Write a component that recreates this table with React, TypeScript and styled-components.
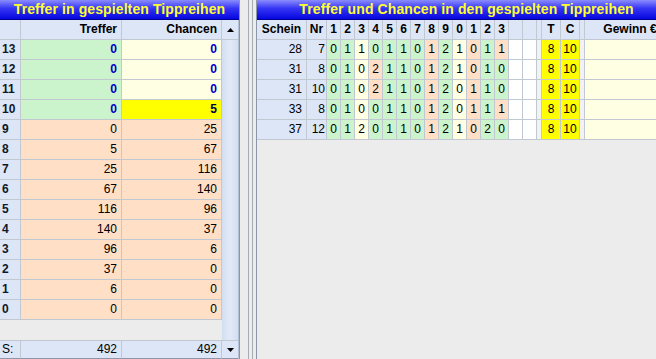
import React from 'react';
import styled, { createGlobalStyle } from 'styled-components';

const GlobalStyle = createGlobalStyle`
	html, body {
		margin: 0;
		padding: 0;
		overflow: hidden;
		background: #ececec;
		font-family: "Liberation Sans", Arial, sans-serif;
		font-size: 12px;
	}
`;

type Tone = 'head' | 'green' | 'cream' | 'salmon' | 'yellow' | 'white' | 'gray' | 'fill';

const tones: Record<Tone, string> = {
	head: '#dce6f6',
	green: '#ccf4cc',
	cream: '#ffffe4',
	salmon: '#ffdfc6',
	yellow: '#ffff00',
	white: '#ffffff',
	gray: '#f2f2f2',
	fill: '#ececec',
};

const leftRows = [
	{ n: 13, t: 0, c: 0, top: true },
	{ n: 12, t: 0, c: 0, top: true },
	{ n: 11, t: 0, c: 0, top: true },
	{ n: 10, t: 0, c: 5, top: true, hit: true },
	{ n: 9, t: 0, c: 25 },
	{ n: 8, t: 5, c: 67 },
	{ n: 7, t: 25, c: 116 },
	{ n: 6, t: 67, c: 140 },
	{ n: 5, t: 116, c: 96 },
	{ n: 4, t: 140, c: 37 },
	{ n: 3, t: 96, c: 6 },
	{ n: 2, t: 37, c: 0 },
	{ n: 1, t: 6, c: 0 },
	{ n: 0, t: 0, c: 0 },
];

const tips = [
	{ schein: 28, nr: 7, d: '0110110121011', c: 'GGCGGGGSGCSGS' },
	{ schein: 31, nr: 8, d: '0102110121010', c: 'GGCSGGGSGCSGG' },
	{ schein: 31, nr: 10, d: '0102110120110', c: 'GGCSGGGSGCSGG' },
	{ schein: 33, nr: 8, d: '0100110120111', c: 'GGCGGGGSGCSGS' },
	{ schein: 37, nr: 12, d: '0120110121020', c: 'GGCGGGGSGCSGG' },
];

const games = ['1', '2', '3', '4', '5', '6', '7', '8', '9', '0', '1', '2', '3'];
const toneOf: Record<string, Tone> = { G: 'green', C: 'cream', S: 'salmon' };

const Arrow = ({ up }: { up?: boolean }) => (
	<svg width="7" height="4" viewBox="0 0 7 4">
		<polygon points={up ? '0,4 7,4 3.5,0' : '0,0 7,0 3.5,4'} fill="#000" />
	</svg>
);

const App = () => {
	return (
		<Screen>
			<GlobalStyle />
			<LeftPanel>
				<Title>Treffer in gespielten Tippreihen</Title>
				<LeftBody>
					<LeftGrid>
						<Cell tone="head" />
						<Cell tone="head" bold align="right">Treffer</Cell>
						<Cell tone="head" bold align="right">Chancen</Cell>
						{leftRows.map((r) => (
							<React.Fragment key={r.n}>
								<Cell tone="head" bold align="left" ink="#101828">{r.n}</Cell>
								<Cell tone={r.top ? 'green' : 'salmon'} align="right" bold={r.top} ink={r.top ? '#0000c8' : '#000'}>
									{r.t}
								</Cell>
								<Cell
									tone={r.hit ? 'yellow' : r.top ? 'cream' : 'salmon'}
									align="right"
									bold={r.top}
									ink={r.hit ? '#000040' : r.top ? '#0000c8' : '#000'}
								>
									{r.c}
								</Cell>
							</React.Fragment>
						))}
						<Filler />
						<SumCell tone="head" align="left">S:</SumCell>
						<SumCell tone="head" align="right">492</SumCell>
						<SumCell tone="head" align="right">492</SumCell>
					</LeftGrid>
					<ScrollBar>
						<ScrollButton><Arrow up /></ScrollButton>
						<ScrollTrack />
						<ScrollButton bottom><Arrow /></ScrollButton>
					</ScrollBar>
				</LeftBody>
			</LeftPanel>

			<Splitter>
				<Grip />
			</Splitter>

			<RightPanel>
				<Title>Treffer und Chancen in den gespielten Tippreihen</Title>
				<RightGrid>
					<Cell tone="head" bold align="center" pad={0}>Schein</Cell>
					<Cell tone="head" bold align="center" pad={0}>Nr</Cell>
					{games.map((g, i) => (
						<Cell key={i} tone="head" bold align="center" pad={0}>{g}</Cell>
					))}
					<Cell tone="head" />
					<Cell tone="head" />
					<Cell tone="head" />
					<Cell tone="head" bold align="center" pad={0}>T</Cell>
					<Cell tone="head" bold align="center" pad={0}>C</Cell>
					<Cell tone="head" />
					<Cell tone="head" bold align="center" pad={0}>Gewinn €</Cell>
					{tips.map((t, ri) => (
						<React.Fragment key={ri}>
							<Cell tone="head" align="right">{t.schein}</Cell>
							<Cell tone="head" align="right" pad={1}>{t.nr}</Cell>
							{t.d.split('').map((v, i) => (
								<Cell key={i} tone={toneOf[t.c[i]]} align="center" pad={0}>{v}</Cell>
							))}
							<Cell tone="white" />
							<Cell tone="white" />
							<Cell tone="gray" />
							<Cell tone="yellow" align="center" pad={0}>8</Cell>
							<Cell tone="yellow" align="center" pad={0}>10</Cell>
							<Cell tone="gray" />
							<Cell tone="cream" />
						</React.Fragment>
					))}
				</RightGrid>
			</RightPanel>
		</Screen>
	);
};

export default App;

const Screen = styled.div`
	display: flex;
	width: 656px;
	height: 359px;
	overflow: hidden;
	background: #ececec;
`;

const Title = styled.div`
	height: 20px;
	box-sizing: border-box;
	line-height: 19px;
	text-align: center;
	white-space: nowrap;
	font-size: 14px;
	font-weight: bold;
	letter-spacing: 0.1px;
	color: #ffff30;
	background: linear-gradient(#8a8cff, #3434f4 45%, #0606e0);
	border-bottom: 1px solid #000090;
`;

const LeftPanel = styled.div`
	width: 240px;
	flex-shrink: 0;
	display: flex;
	flex-direction: column;
	border-right: 1px solid #8c96a8;
	box-sizing: border-box;
`;

const LeftBody = styled.div`
	display: flex;
	flex: 1;
`;

const LeftGrid = styled.div`
	display: grid;
	grid-template-columns: 21px 101px 100px;
	grid-template-rows: repeat(15, 20px) 20px 19px;
	background: #ececec;
`;

const Cell = styled.div<{ tone?: Tone; bold?: boolean; align?: string; ink?: string; pad?: number }>`
	box-sizing: border-box;
	border-right: 1px solid #c2c8d2;
	border-bottom: 1px solid #c2c8d2;
	background: ${(p) => tones[p.tone || 'white']};
	color: ${(p) => p.ink || '#000'};
	font-weight: ${(p) => (p.bold ? 'bold' : 'normal')};
	text-align: ${(p) => p.align || 'left'};
	padding: 0 ${(p) => (p.pad ?? 4)}px 0 ${(p) => (p.align === 'left' ? 2 : 0)}px;
	line-height: 19px;
	white-space: nowrap;
	overflow: hidden;
`;

const SumCell = styled(Cell)`
	border-bottom: 1px solid #8c96a8;
	border-top: 1px solid #c2c8d2;
	line-height: 17px;
`;

const Filler = styled.div`
	grid-column: 1 / span 3;
	background: #ececec;
`;

const ScrollBar = styled.div`
	width: 17px;
	display: flex;
	flex-direction: column;
	background: #d6e2f5;
	border-right: 1px solid #b4c0d4;
`;

const ScrollButton = styled.div<{ bottom?: boolean }>`
	height: ${(p) => (p.bottom ? 19 : 20)}px;
	box-sizing: border-box;
	display: flex;
	align-items: center;
	justify-content: center;
	background: #dce6f6;
	border-bottom: 1px solid ${(p) => (p.bottom ? '#8c96a8' : '#c2c8d2')};
	border-top: ${(p) => (p.bottom ? '1px solid #c2c8d2' : 'none')};
`;

const ScrollTrack = styled.div`
	flex: 1;
	background: linear-gradient(90deg, #d2def2, #e2eaf8 50%, #d2def2);
`;

const Splitter = styled.div`
	width: 16px;
	flex-shrink: 0;
	display: flex;
	padding-left: 8px;
	box-sizing: border-box;
	background: #ececec;
`;

const Grip = styled.div`
	width: 5px;
	box-sizing: border-box;
	border-left: 1px solid #a6acb6;
	border-right: 1px solid #a6acb6;
`;

const RightPanel = styled.div`
	width: 420px;
	flex-shrink: 0;
	display: flex;
	flex-direction: column;
	border-left: 1px solid #8c96a8;
	box-sizing: border-box;
`;

const RightGrid = styled.div`
	display: grid;
	grid-template-columns: 50px 20px repeat(13, 14px) 14px 14px 5px 19px 19px 5px 91px;
	grid-auto-rows: 20px;
`;
